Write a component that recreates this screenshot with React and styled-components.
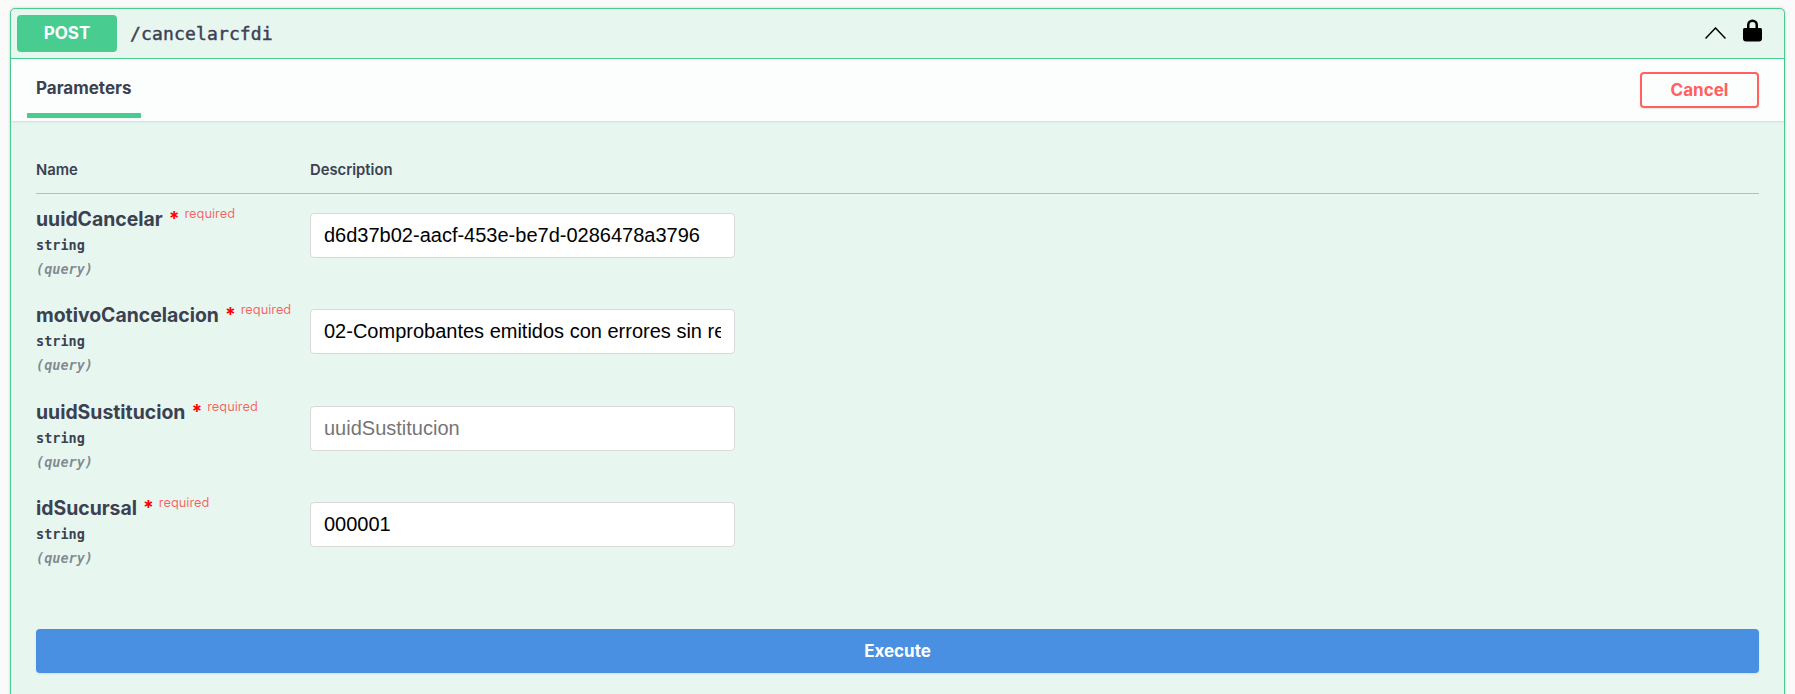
import React from "react";
import styled, { createGlobalStyle } from "styled-components";

const Global = createGlobalStyle`
  html, body { margin: 0; padding: 0; background: #fafafa; height: 694px; overflow: hidden; }
  body { font-family: Inter, "Liberation Sans", sans-serif; color: #3b4151; }
`;
const Block = styled.section`
  margin: 8px 10px 0 10px;
  border: 1px solid #49cc90;
  border-radius: 5px;
  background: #e8f6f0;
  box-shadow: 0 0 3px rgba(0,0,0,.19);
  height: 720px;
  box-sizing: border-box;
`;
const Summary = styled.header`
  display: flex;
  align-items: center;
  height: 50px;
  padding: 0 6px;
  box-sizing: border-box;
  border-bottom: 1px solid #49cc90;
`;
const Method = styled.span`
  width: 100px;
  height: 37px;
  display: flex;
  align-items: center;
  justify-content: center;
  background: #49cc90;
  color: #fff;
  border-radius: 4px;
  font-size: 17px;
  font-weight: 700;
  padding-bottom: 1px;
  box-sizing: border-box;
`;
const Path = styled.span`
  margin-left: 13px;
  flex: 1;
  font: 400 18px "DejaVu Sans Mono", monospace;
  letter-spacing: .15px;
  -webkit-text-stroke: .45px #3b4151;
`;
const Icons = styled.div`
  display: flex;
  align-items: flex-end;
  gap: 17px;
  margin-right: 16px;
  margin-top: -6px;
`;
const Chevron = styled.svg`
  margin-bottom: 3px;
`;
const TabBar = styled.div`
  display: flex;
  align-items: center;
  justify-content: space-between;
  height: 62px;
  background: rgba(255,255,255,.85);
  box-shadow: 0 1px 2px rgba(0,0,0,.1);
  padding: 0 25px 0 16px;
`;
const Tab = styled.div`
  width: 114px;
  height: 59px;
  margin-bottom: 3px;
  padding-left: 9px;
  box-sizing: border-box;
  border-bottom: 5px solid #49cc90;
  line-height: 59px;
  font-size: 17px;
  font-weight: 700;
`;
const Cancel = styled.button`
  width: 119px;
  height: 36px;
  border: 2px solid #ff6060;
  border-radius: 4px;
  background: transparent;
  color: #ff6060;
  font: 700 17px Inter, sans-serif;
  box-shadow: 0 1px 2px rgba(0,0,0,.1);
  padding: 0;
`;
const Body = styled.div`
  padding: 26px 25px 0 25px;
`;
const Head = styled.div`
  display: grid;
  grid-template-columns: 274px 1fr;
  height: 47px;
  padding-top: 14px;
  box-sizing: border-box;
  border-bottom: 1px solid rgba(59,65,81,.3);
  font-size: 14.800px;
  font-weight: 600;
`;
const Row = styled.div`
  display: grid;
  grid-template-columns: 274px 1fr;
  height: 96.300px;
`;
const Info = styled.div`
  padding-top: 13px;
`;
const ParamName = styled.div`
  font-size: 19.400px;
  font-weight: 700;
  line-height: 24px;
  white-space: nowrap;
`;
const Star = styled.span`
  color: red;
  margin-left: 6px;
  font-weight: 700;
`;
const Required = styled.sup`
  color: rgba(255,0,0,.6);
  font-size: 12.800px;
  font-weight: 400;
  margin-left: 5px;
  line-height: 0;
  vertical-align: 8px;
`;
const Type = styled.div`
  font: 600 13.500px "DejaVu Sans Mono", monospace;
  margin-top: 6px;
  line-height: 16px;
`;
const Location = styled.div`
  font: italic 600 13.500px "DejaVu Sans Mono", monospace;
  color: rgba(59,65,81,.6);
  margin-top: 8px;
  line-height: 16px;
`;
const Field = styled.input`
  width: 425px;
  height: 45px;
  margin-top: 19px;
  box-sizing: border-box;
  border: 1px solid #d9d9d9;
  border-radius: 4px;
  background: #fff;
  padding: 8px 13px;
  font: 20px "Liberation Sans", sans-serif;
  color: #000;
  &::placeholder { color: #757575; }
`;
const Execute = styled.button`
  display: block;
  width: 100%;
  height: 44px;
  margin-top: 50px;
  border: 0;
  border-radius: 4px;
  background: #4990e2;
  color: #fff;
  font: 700 17px Inter, sans-serif;
  box-shadow: 0 1px 2px rgba(0,0,0,.1);
`;

const params = [
  { name: "uuidCancelar", value: "d6d37b02-aacf-453e-be7d-0286478a3796" },
  { name: "motivoCancelacion", value: "02-Comprobantes emitidos con errores sin relación" },
  { name: "uuidSustitucion", value: "" },
  { name: "idSucursal", value: "000001" },
];

export default function App() {
  return (
    <>
      <Global />
      <Block>
        <Summary>
          <Method>POST</Method>
          <Path>/cancelarcfdi</Path>
          <Icons>
            <Chevron width="21" height="12" viewBox="0 0 21 12" fill="none">
              <path d="M.5 11.500 L10.500 1 L20.500 11.500" stroke="#000" strokeWidth="1.5" />
            </Chevron>
            <svg width="19" height="23" viewBox="0 0 19 23">
              <path d="M4 9V6a5.500 5.500 0 0 1 11 0v3h2.500A1.500 1.500 0 0 1 19 10.500v9a3 3 0 0 1-3 3H3a3 3 0 0 1-3-3v-9A1.500 1.500 0 0 1 1.500 9zM6.500 9h6V6a3 3 0 0 0-6 0z" fill="#000" />
            </svg>
          </Icons>
        </Summary>
        <TabBar>
          <Tab>Parameters</Tab>
          <Cancel>Cancel</Cancel>
        </TabBar>
        <Body>
          <Head>
            <div>Name</div>
            <div>Description</div>
          </Head>
          {params.map((p) => (
            <Row key={p.name}>
              <Info>
                <ParamName>
                  {p.name}
                  <Star>*</Star>
                  <Required>required</Required>
                </ParamName>
                <Type>string</Type>
                <Location>(query)</Location>
              </Info>
              <div>
                <Field readOnly value={p.value} placeholder={p.name} />
              </div>
            </Row>
          ))}
          <Execute>Execute</Execute>
        </Body>
      </Block>
    </>
  );
}
